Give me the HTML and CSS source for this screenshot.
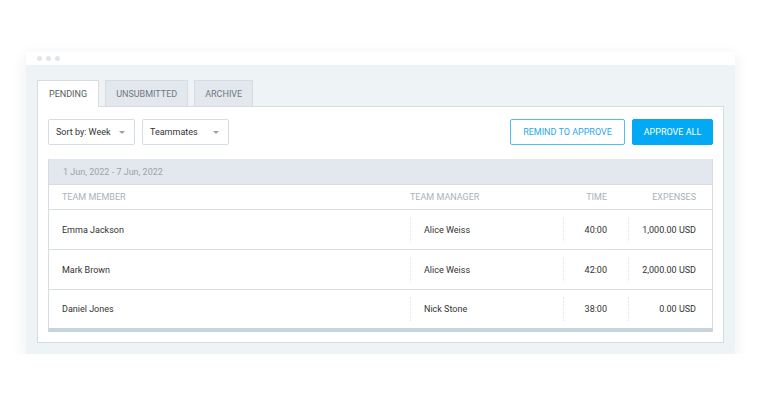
FILE: index.html
```html
<!DOCTYPE html>
<html lang="en">
<head>
    <meta charset="UTF-8">
    <title>Timesheets - Pending</title>
    <link rel="stylesheet" href="styles.css">
</head>
<body>
    <div class="window">
        <div class="titlebar">
            <span class="dot"></span><span class="dot"></span><span class="dot"></span>
        </div>
        <div class="window-body">
            <div class="tabs">
                <div class="tab active">PENDING</div>
                <div class="tab">UNSUBMITTED</div>
                <div class="tab">ARCHIVE</div>
            </div>
            <div class="panel">
                <div class="toolbar">
                    <div class="select sort">Sort by: Week <span class="caret"></span></div>
                    <div class="select mates">Teammates <span class="caret"></span></div>
                    <div class="spacer"></div>
                    <button class="btn btn-outline">REMIND TO APPROVE</button>
                    <button class="btn btn-primary">APPROVE ALL</button>
                </div>

                <div class="table">
                    <div class="date-row">1 Jun, 2022 - 7 Jun, 2022</div>
                    <div class="row head">
                        <div class="cell member">TEAM MEMBER</div>
                        <div class="cell manager">TEAM MANAGER</div>
                        <div class="cell time">TIME</div>
                        <div class="cell expenses">EXPENSES</div>
                    </div>
                    <div class="row">
                        <div class="cell member">Emma Jackson</div>
                        <div class="cell manager">Alice Weiss</div>
                        <div class="cell time">40:00</div>
                        <div class="cell expenses">1,000.00 USD</div>
                    </div>
                    <div class="row">
                        <div class="cell member">Mark Brown</div>
                        <div class="cell manager">Alice Weiss</div>
                        <div class="cell time">42:00</div>
                        <div class="cell expenses">2,000.00 USD</div>
                    </div>
                    <div class="row last">
                        <div class="cell member">Daniel Jones</div>
                        <div class="cell manager">Nick Stone</div>
                        <div class="cell time">38:00</div>
                        <div class="cell expenses">0.00 USD</div>
                    </div>
                </div>
            </div>
        </div>
    </div>
</body>
</html>
```

FILE: styles.css
```css
* {
    margin: 0;
    padding: 0;
    box-sizing: border-box;
}

body {
    font-family: 'Roboto', 'Liberation Sans', sans-serif;
    background: #ffffff;
    color: #333;
    font-size: 9px;
}

.window {
    margin: 52px 0 0 26px;
    width: 709px;
    height: 302px;
    background: #eef3f6;
    box-shadow: 0 4px 14px rgba(40, 60, 80, 0.09);
    display: flex;
    flex-direction: column;
}

.titlebar {
    height: 15px;
    background: #fff;
    display: flex;
    align-items: center;
    gap: 4px;
    padding-left: 11px;
}

.dot {
    width: 5px;
    height: 5px;
    border-radius: 50%;
    background: #e0e6eb;
}

.window-body {
    flex: 1;
    padding: 15px 11px 11px 11px;
    display: flex;
    flex-direction: column;
}

.tabs {
    display: flex;
    gap: 6px;
    height: 26px;
}

.tab {
    height: 26px;
    padding: 0 10px;
    display: flex;
    align-items: center;
    background: #e3e8ee;
    border: 1px solid #d5dde3;
    border-bottom: none;
    color: #70787f;
    font-size: 9px;
}

.tab.active {
    background: #fff;
    height: 27px;
    padding: 0 11px;
    position: relative;
    z-index: 1;
    color: #555c62;
}

.panel {
    flex: 1;
    background: #fff;
    border: 1px solid #d5dde3;
    padding: 12px 10px 10px 10px;
    display: flex;
    flex-direction: column;
}

.toolbar {
    display: flex;
    align-items: center;
    gap: 7px;
    height: 26px;
    margin-bottom: 14px;
}

.select {
    height: 26px;
    border: 1px solid #d5dde3;
    border-radius: 2px;
    display: flex;
    align-items: center;
    padding: 0 7px;
    color: #333;
    justify-content: space-between;
}

.select.sort {
    width: 87px;
}

.select.mates {
    width: 87px;
}

.caret {
    width: 0;
    height: 0;
    border-left: 3px solid transparent;
    border-right: 3px solid transparent;
    border-top: 3px solid #9aa1a7;
    margin-right: 2px;
}

.spacer {
    flex: 1;
}

.btn {
    height: 26px;
    font-family: inherit;
    font-size: 9px;
    border-radius: 2px;
    cursor: pointer;
}

.btn-outline {
    width: 115px;
    background: #fff;
    border: 1px solid #4cc0f5;
    color: #2aa8ec;
}

.btn-primary {
    width: 81px;
    background: #03a9f4;
    border: 1px solid #03a9f4;
    color: #fff;
}

.table {
    border-left: 1px solid #d5dde3;
    border-right: 1px solid #d5dde3;
    border-bottom: 4px solid #c8d3db;
}

.date-row {
    height: 26px;
    background: #e3e8ee;
    border-bottom: 1px solid #d5dde3;
    color: #9aa3ab;
    display: flex;
    align-items: center;
    padding-left: 14px;
}

.row {
    display: grid;
    grid-template-columns: 361px 153px 65px 1fr;
    height: 40px;
    border-bottom: 1px solid #d8e0e6;
}

.row.last {
    height: 38px;
    border-bottom: none;
}

.row.head {
    height: 25px;
    color: #aab2b9;
}

.cell {
    display: flex;
    align-items: center;
}

.cell.member {
    padding-left: 13px;
}

.row:not(.head) .cell.manager,
.row:not(.head) .cell.time,
.row:not(.head) .cell.expenses {
    border-left: 1px dotted #dfe4e8;
    margin: 7px 0;
}

.row:not(.head) .cell.manager {
    padding-left: 13px;
}

.cell.time {
    justify-content: flex-end;
    padding-right: 21px;
}

.cell.expenses {
    justify-content: flex-end;
    padding-right: 16px;
}
```
